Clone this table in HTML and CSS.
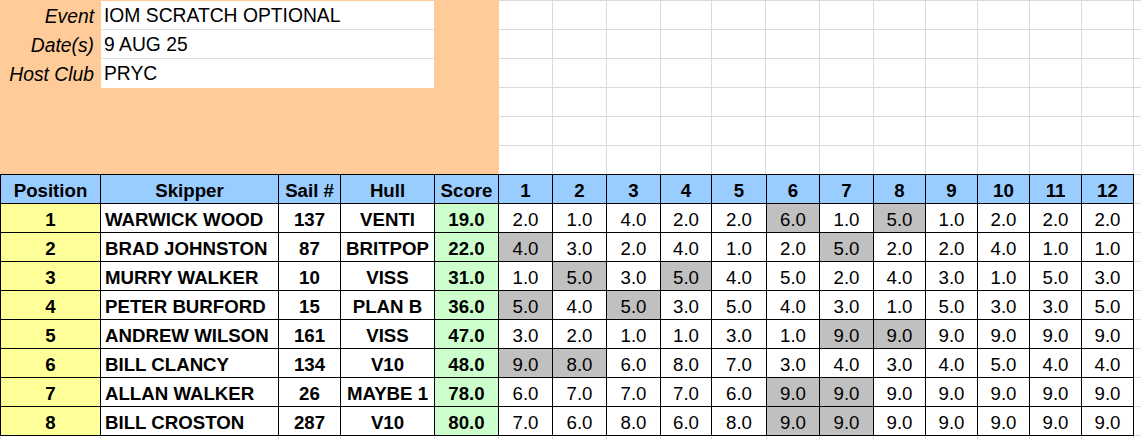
FILE: index.html
```html
<!DOCTYPE html>
<html>
<head>
<meta charset="utf-8">
<title>IOM Scratch Optional Results</title>
<link rel="stylesheet" href="styles.css">
</head>
<body>
<div class="sheet">
  <div class="top">
    <div class="info">
      <div class="info-row"><div class="label">Event</div><div class="value">IOM SCRATCH OPTIONAL</div></div>
      <div class="info-row"><div class="label">Date(s)</div><div class="value">9 AUG 25</div></div>
      <div class="info-row"><div class="label">Host Club</div><div class="value">PRYC</div></div>
    </div>
    <div class="blank-grid">
      <div></div><div></div><div></div><div></div><div></div><div></div><div></div><div></div><div></div><div></div><div></div><div></div><div></div>
      <div></div><div></div><div></div><div></div><div></div><div></div><div></div><div></div><div></div><div></div><div></div><div></div><div></div>
      <div></div><div></div><div></div><div></div><div></div><div></div><div></div><div></div><div></div><div></div><div></div><div></div><div></div>
      <div></div><div></div><div></div><div></div><div></div><div></div><div></div><div></div><div></div><div></div><div></div><div></div><div></div>
      <div></div><div></div><div></div><div></div><div></div><div></div><div></div><div></div><div></div><div></div><div></div><div></div><div></div>
      <div></div><div></div><div></div><div></div><div></div><div></div><div></div><div></div><div></div><div></div><div></div><div></div><div></div>
    </div>
  </div>
  <div class="results-wrap">
    <div class="results">
      <div class="h">Position</div><div class="h">Skipper</div><div class="h">Sail #</div><div class="h">Hull</div><div class="h">Score</div>
      <div class="h">1</div><div class="h">2</div><div class="h">3</div><div class="h">4</div><div class="h">5</div><div class="h">6</div><div class="h">7</div><div class="h">8</div><div class="h">9</div><div class="h">10</div><div class="h">11</div><div class="h">12</div>

      <div class="pos">1</div><div class="name">WARWICK WOOD</div><div class="b">137</div><div class="b">VENTI</div><div class="score">19.0</div>
      <div class="r">2.0</div><div class="r">1.0</div><div class="r">4.0</div><div class="r">2.0</div><div class="r">2.0</div><div class="r d">6.0</div><div class="r">1.0</div><div class="r d">5.0</div><div class="r">1.0</div><div class="r">2.0</div><div class="r">2.0</div><div class="r">2.0</div>

      <div class="pos">2</div><div class="name">BRAD JOHNSTON</div><div class="b">87</div><div class="b">BRITPOP</div><div class="score">22.0</div>
      <div class="r d">4.0</div><div class="r">3.0</div><div class="r">2.0</div><div class="r">4.0</div><div class="r">1.0</div><div class="r">2.0</div><div class="r d">5.0</div><div class="r">2.0</div><div class="r">2.0</div><div class="r">4.0</div><div class="r">1.0</div><div class="r">1.0</div>

      <div class="pos">3</div><div class="name">MURRY WALKER</div><div class="b">10</div><div class="b">VISS</div><div class="score">31.0</div>
      <div class="r">1.0</div><div class="r d">5.0</div><div class="r">3.0</div><div class="r d">5.0</div><div class="r">4.0</div><div class="r">5.0</div><div class="r">2.0</div><div class="r">4.0</div><div class="r">3.0</div><div class="r">1.0</div><div class="r">5.0</div><div class="r">3.0</div>

      <div class="pos">4</div><div class="name">PETER BURFORD</div><div class="b">15</div><div class="b">PLAN B</div><div class="score">36.0</div>
      <div class="r d">5.0</div><div class="r">4.0</div><div class="r d">5.0</div><div class="r">3.0</div><div class="r">5.0</div><div class="r">4.0</div><div class="r">3.0</div><div class="r">1.0</div><div class="r">5.0</div><div class="r">3.0</div><div class="r">3.0</div><div class="r">5.0</div>

      <div class="pos">5</div><div class="name">ANDREW WILSON</div><div class="b">161</div><div class="b">VISS</div><div class="score">47.0</div>
      <div class="r">3.0</div><div class="r">2.0</div><div class="r">1.0</div><div class="r">1.0</div><div class="r">3.0</div><div class="r">1.0</div><div class="r d">9.0</div><div class="r d">9.0</div><div class="r">9.0</div><div class="r">9.0</div><div class="r">9.0</div><div class="r">9.0</div>

      <div class="pos">6</div><div class="name">BILL CLANCY</div><div class="b">134</div><div class="b">V10</div><div class="score">48.0</div>
      <div class="r d">9.0</div><div class="r d">8.0</div><div class="r">6.0</div><div class="r">8.0</div><div class="r">7.0</div><div class="r">3.0</div><div class="r">4.0</div><div class="r">3.0</div><div class="r">4.0</div><div class="r">5.0</div><div class="r">4.0</div><div class="r">4.0</div>

      <div class="pos">7</div><div class="name">ALLAN WALKER</div><div class="b">26</div><div class="b">MAYBE 1</div><div class="score">78.0</div>
      <div class="r">6.0</div><div class="r">7.0</div><div class="r">7.0</div><div class="r">7.0</div><div class="r">6.0</div><div class="r d">9.0</div><div class="r d">9.0</div><div class="r">9.0</div><div class="r">9.0</div><div class="r">9.0</div><div class="r">9.0</div><div class="r">9.0</div>

      <div class="pos">8</div><div class="name">BILL CROSTON</div><div class="b">287</div><div class="b">V10</div><div class="score">80.0</div>
      <div class="r">7.0</div><div class="r">6.0</div><div class="r">8.0</div><div class="r">6.0</div><div class="r">8.0</div><div class="r d">9.0</div><div class="r d">9.0</div><div class="r">9.0</div><div class="r">9.0</div><div class="r">9.0</div><div class="r">9.0</div><div class="r">9.0</div>
    </div>
    <div class="right-fill"></div>
  </div>
  <div class="bottom-fill">
    <div></div><div></div><div></div><div></div><div></div><div></div><div></div><div></div><div></div><div></div><div></div><div></div><div></div><div></div><div></div><div></div><div></div><div></div>
  </div>
</div>
</body>
</html>
```

FILE: styles.css
```css
html, body {
  margin: 0;
  padding: 0;
  background: #ffffff;
}

.sheet {
  width: 1141px;
  height: 439px;
  overflow: hidden;
  font-family: "Liberation Sans", Arial, sans-serif;
  font-size: 18.67px;
  color: #000;
}

.top {
  display: flex;
  height: 174px;
}

.info {
  width: 499px;
  flex: none;
  background: #ffcc99;
  padding-top: 1px;
  box-sizing: border-box;
  font-size: 19.3px;
}

.info-row {
  display: flex;
  height: 29px;
}

.label {
  width: 101px;
  box-sizing: border-box;
  padding-right: 7px;
  text-align: right;
  font-style: italic;
  line-height: 28px;
  padding-top: 2px;
  height: 28px;
  white-space: nowrap;
}

.value {
  width: 333px;
  box-sizing: border-box;
  background: #fff;
  border-bottom: 1px solid #dedede;
  padding-left: 3px;
  padding-top: 2px;
  line-height: 26px;
  height: 29px;
  white-space: nowrap;
}

.info-row:last-child .value {
  border-bottom-color: #fff;
}

.blank-grid {
  flex: 1;
  display: grid;
  grid-template-columns: 53px 53px 53px 50px 53px 53px 53px 51px 51px 51px 51px 51px 7px;
  grid-auto-rows: 28px;
  gap: 1px;
  padding-top: 1px;
  background: #dadada;
  align-content: start;
}

.blank-grid > div {
  background: #fff;
}

.results-wrap {
  display: flex;
}

.results {
  display: grid;
  grid-template-columns: 99px 177px 61px 93px 63px 53px 53px 53px 50px 54px 52px 53px 51px 51px 51px 51px 51px;
  grid-auto-rows: 28px;
  gap: 1px;
  padding: 1px;
  background: #000;
  flex: none;
}

.results > div {
  background: #fff;
  text-align: center;
  line-height: 28px;
  padding-top: 2px;
  height: 28px;
  box-sizing: border-box;
  white-space: nowrap;
  overflow: hidden;
}

.results > .h {
  background: #99ccff;
  font-weight: bold;
}

.results > .pos {
  background: #ffff99;
  font-weight: bold;
}

.results > .name {
  font-weight: bold;
  text-align: left;
  padding-left: 4px;
}

.results > .b {
  font-weight: bold;
}

.results > .score {
  background: #ccffcc;
  font-weight: bold;
}

.results > .d {
  background: #c0c0c0;
}

.right-fill {
  flex: 1;
  height: 262px;
  background: repeating-linear-gradient(to bottom, #dadada 0, #dadada 1px, #ffffff 1px, #ffffff 29px);
}

.bottom-fill {
  display: grid;
  grid-template-columns: 99px 177px 61px 93px 63px 53px 53px 53px 50px 54px 52px 53px 51px 51px 51px 51px 51px 7px;
  gap: 1px;
  padding-left: 1px;
  height: 3px;
  background: #dadada;
}

.bottom-fill > div {
  background: #fff;
}
```
